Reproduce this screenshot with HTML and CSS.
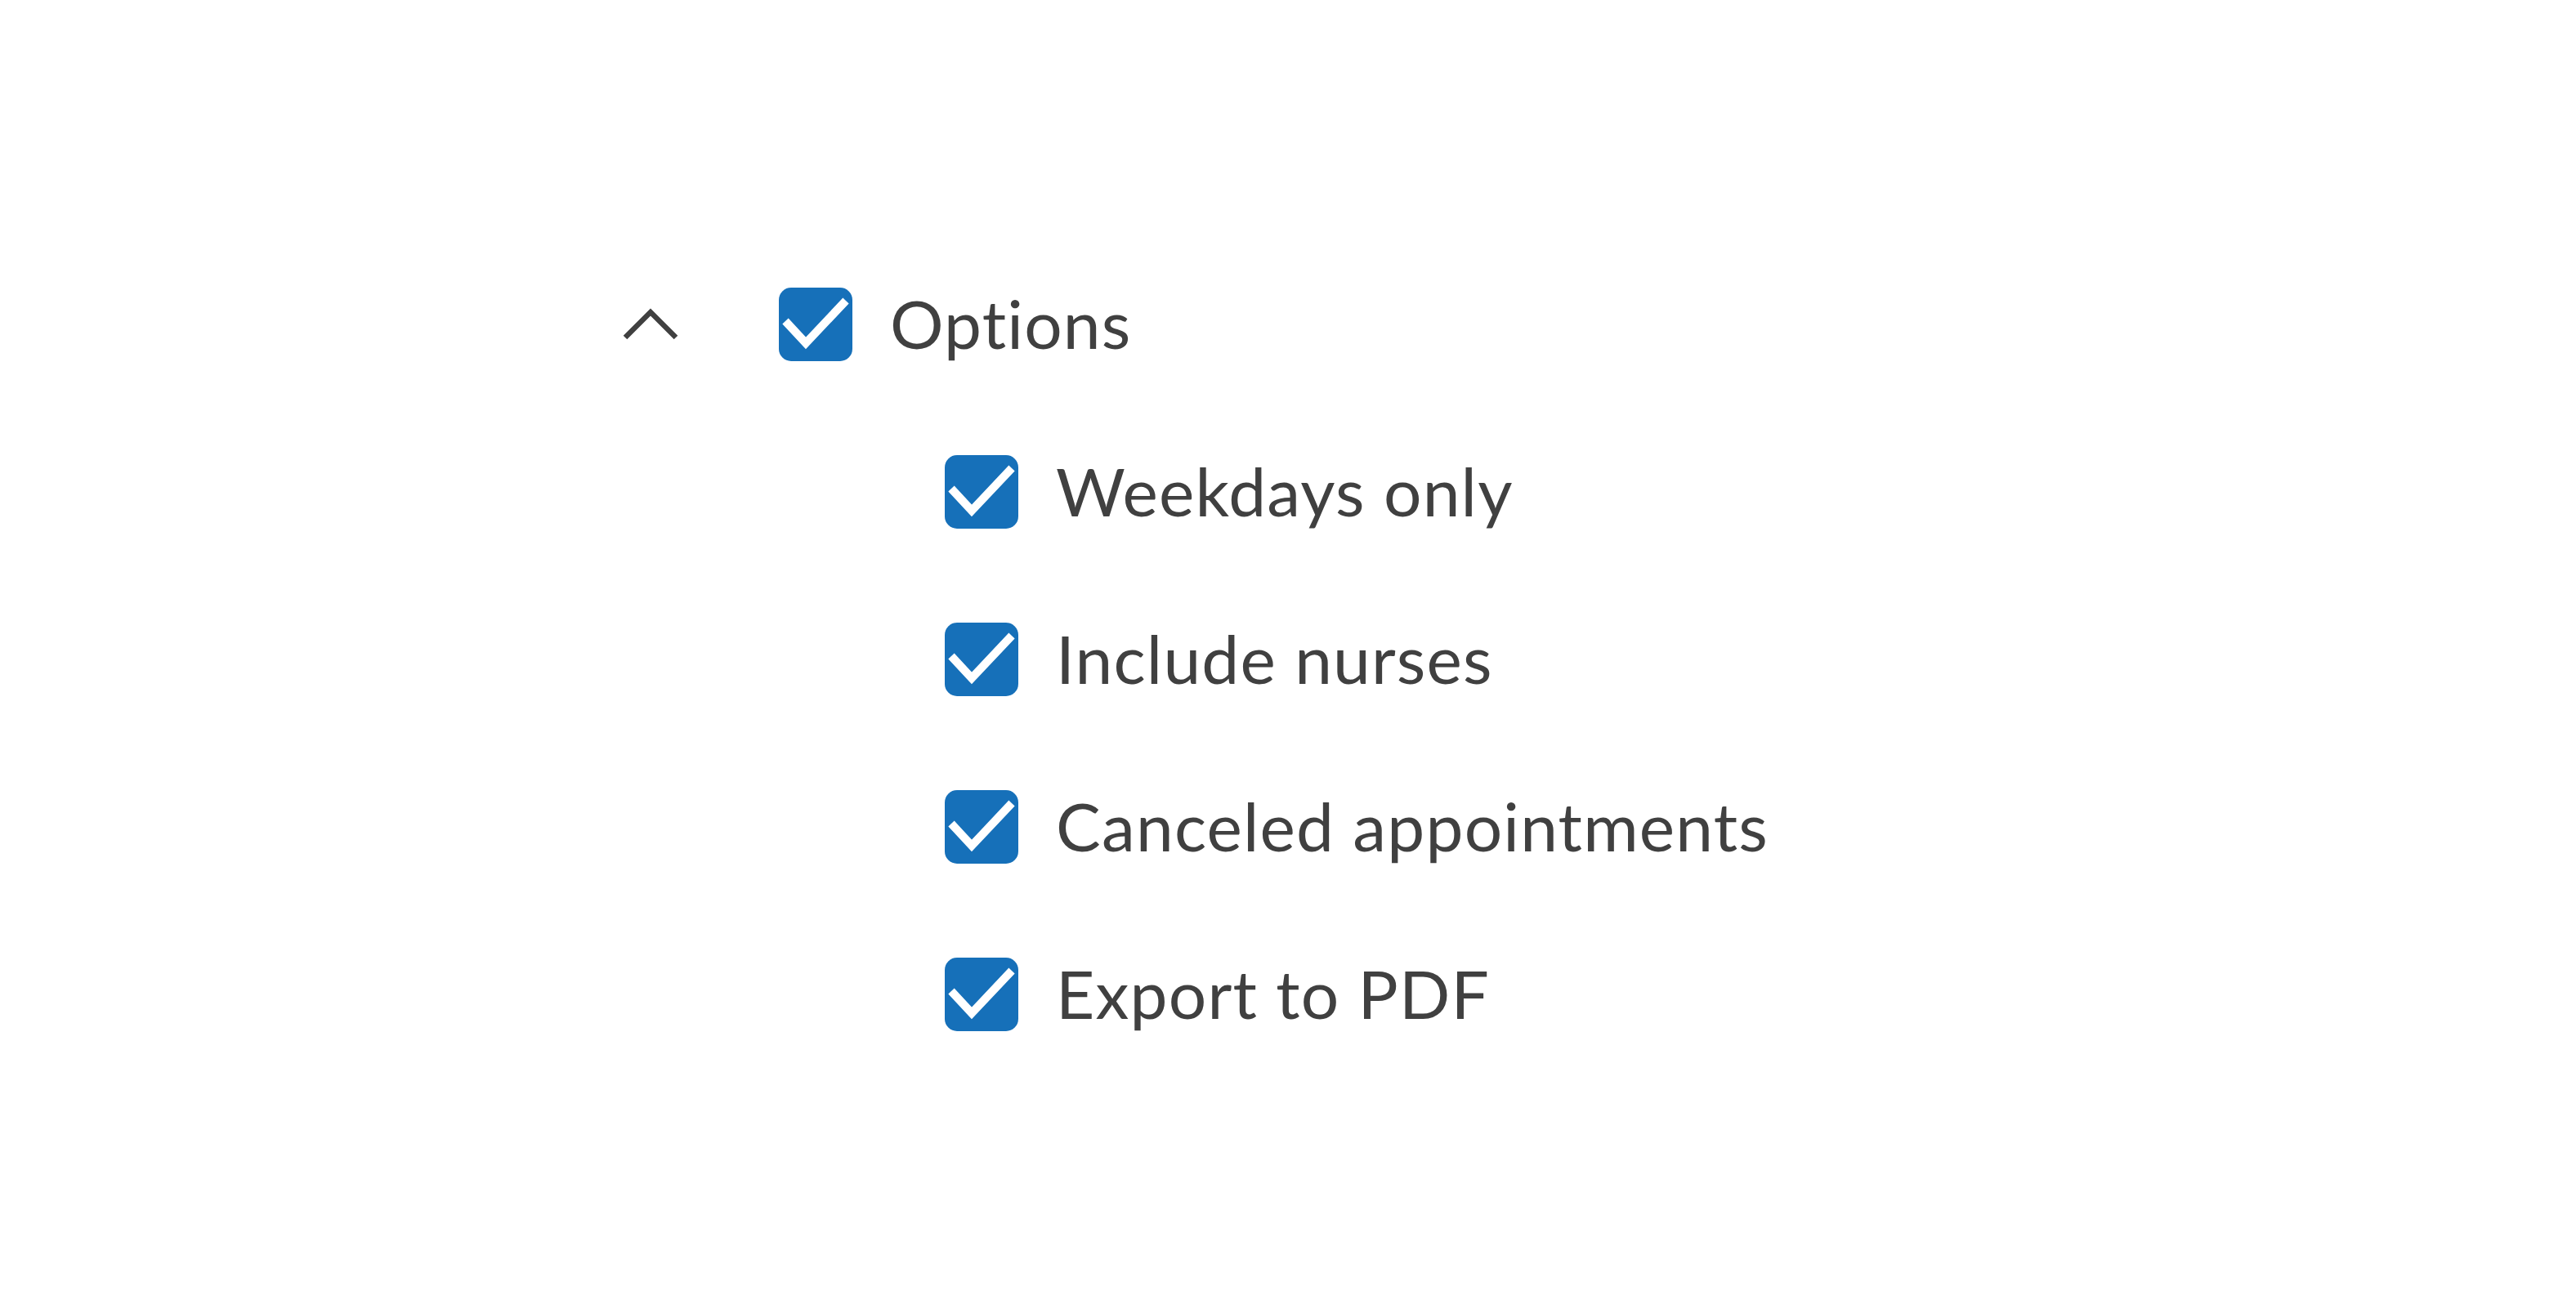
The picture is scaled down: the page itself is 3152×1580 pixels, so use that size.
FILE: index.html
```html
<!DOCTYPE html>
<html lang="en">
<head>
<meta charset="utf-8">
<title>Options</title>
<link rel="stylesheet" href="styles.css">
</head>
<body>
<div class="tree">
  <div class="row parent">
    <span class="toggle" role="button" aria-label="Collapse">
      <svg width="70" height="44" viewBox="0 0 70 44"><polyline points="4,38 35,7 66,38" fill="none" stroke="#404040" stroke-width="6.5"/></svg>
    </span>
    <span class="box"><svg width="90" height="90" viewBox="0 0 90 90"><polyline points="8,41 33,68 82,16" fill="none" stroke="#fff" stroke-width="10"/></svg></span>
    <span class="label">Options</span>
  </div>
  <div class="children">
    <div class="row">
      <span class="box"><svg width="90" height="90" viewBox="0 0 90 90"><polyline points="8,41 33,68 82,16" fill="none" stroke="#fff" stroke-width="10"/></svg></span>
      <span class="label">Weekdays only</span>
    </div>
    <div class="row">
      <span class="box"><svg width="90" height="90" viewBox="0 0 90 90"><polyline points="8,41 33,68 82,16" fill="none" stroke="#fff" stroke-width="10"/></svg></span>
      <span class="label">Include nurses</span>
    </div>
    <div class="row">
      <span class="box"><svg width="90" height="90" viewBox="0 0 90 90"><polyline points="8,41 33,68 82,16" fill="none" stroke="#fff" stroke-width="10"/></svg></span>
      <span class="label">Canceled appointments</span>
    </div>
    <div class="row">
      <span class="box"><svg width="90" height="90" viewBox="0 0 90 90"><polyline points="8,41 33,68 82,16" fill="none" stroke="#fff" stroke-width="10"/></svg></span>
      <span class="label">Export to PDF</span>
    </div>
  </div>
</div>
</body>
</html>
```
FILE: styles.css
```css
html, body {
  margin: 0;
  padding: 0;
  background: #ffffff;
}
body {
  font-family: "Lato", "Liberation Sans", sans-serif;
  color: #404040;
}
.tree {
  display: flex;
  flex-direction: column;
  gap: 115px;
  padding: 352px 0 0 761px;
}
.children {
  display: flex;
  flex-direction: column;
  gap: 115px;
  padding-left: 395px;
}
.row {
  display: flex;
  align-items: flex-start;
  height: 90px;
}
.toggle {
  display: block;
  flex: none;
  box-sizing: border-box;
  width: 70px;
  height: 90px;
  padding-top: 23px;
  margin-right: 122px;
}
.toggle svg {
  display: block;
}
.box {
  flex: none;
  width: 90px;
  height: 90px;
  border-radius: 15px;
  background: #1670b9;
  display: block;
  overflow: hidden;
}
.box svg {
  display: block;
}
.label {
  margin-left: 46px;
  font-size: 82px;
  line-height: 86px;
  letter-spacing: 1.2px;
  font-variant-ligatures: none;
  white-space: nowrap;
}
```
